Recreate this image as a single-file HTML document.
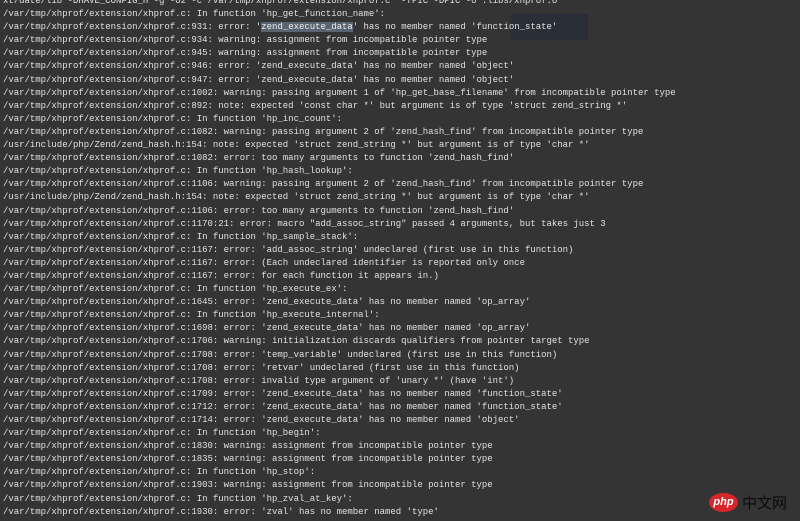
<!DOCTYPE html>
<html><head><meta charset="utf-8"><style>
html,body{margin:0;padding:0;width:800px;height:521px;overflow:hidden;background:#343434;}
pre{position:absolute;left:3px;top:-5px;margin:0;font-family:"Liberation Mono",monospace;font-size:9px;letter-spacing:-0.02px;line-height:13.1px;color:#e0e0e0;white-space:pre;}
.hl{background:#5a6470;color:#eee;}
.box{position:absolute;left:511px;top:14px;width:77px;height:26px;background:rgba(30,40,60,0.45);}
.logo{position:absolute;left:709px;top:493px;width:29px;height:19px;border-radius:50%;background:#d8262b;color:#fff;font:italic bold 11px "Liberation Sans",sans-serif;text-align:center;line-height:19px;}
.cn{position:absolute;left:742px;top:493px;font:15px "Noto Sans CJK SC",sans-serif;color:#0a0a0a;line-height:19px;}
</style></head><body>
<div class="box"></div>
<pre>xt/date/lib -DHAVE_CONFIG_H -g -O2 -c /var/tmp/xhprof/extension/xhprof.c  -fPIC -DPIC -o .libs/xhprof.o
/var/tmp/xhprof/extension/xhprof.c: In function 'hp_get_function_name':
/var/tmp/xhprof/extension/xhprof.c:931: error: '<span class="hl">zend_execute_data</span>' has no member named 'function_state'
/var/tmp/xhprof/extension/xhprof.c:934: warning: assignment from incompatible pointer type
/var/tmp/xhprof/extension/xhprof.c:945: warning: assignment from incompatible pointer type
/var/tmp/xhprof/extension/xhprof.c:946: error: 'zend_execute_data' has no member named 'object'
/var/tmp/xhprof/extension/xhprof.c:947: error: 'zend_execute_data' has no member named 'object'
/var/tmp/xhprof/extension/xhprof.c:1002: warning: passing argument 1 of 'hp_get_base_filename' from incompatible pointer type
/var/tmp/xhprof/extension/xhprof.c:892: note: expected 'const char *' but argument is of type 'struct zend_string *'
/var/tmp/xhprof/extension/xhprof.c: In function 'hp_inc_count':
/var/tmp/xhprof/extension/xhprof.c:1082: warning: passing argument 2 of 'zend_hash_find' from incompatible pointer type
/usr/include/php/Zend/zend_hash.h:154: note: expected 'struct zend_string *' but argument is of type 'char *'
/var/tmp/xhprof/extension/xhprof.c:1082: error: too many arguments to function 'zend_hash_find'
/var/tmp/xhprof/extension/xhprof.c: In function 'hp_hash_lookup':
/var/tmp/xhprof/extension/xhprof.c:1106: warning: passing argument 2 of 'zend_hash_find' from incompatible pointer type
/usr/include/php/Zend/zend_hash.h:154: note: expected 'struct zend_string *' but argument is of type 'char *'
/var/tmp/xhprof/extension/xhprof.c:1106: error: too many arguments to function 'zend_hash_find'
/var/tmp/xhprof/extension/xhprof.c:1170:21: error: macro "add_assoc_string" passed 4 arguments, but takes just 3
/var/tmp/xhprof/extension/xhprof.c: In function 'hp_sample_stack':
/var/tmp/xhprof/extension/xhprof.c:1167: error: 'add_assoc_string' undeclared (first use in this function)
/var/tmp/xhprof/extension/xhprof.c:1167: error: (Each undeclared identifier is reported only once
/var/tmp/xhprof/extension/xhprof.c:1167: error: for each function it appears in.)
/var/tmp/xhprof/extension/xhprof.c: In function 'hp_execute_ex':
/var/tmp/xhprof/extension/xhprof.c:1645: error: 'zend_execute_data' has no member named 'op_array'
/var/tmp/xhprof/extension/xhprof.c: In function 'hp_execute_internal':
/var/tmp/xhprof/extension/xhprof.c:1698: error: 'zend_execute_data' has no member named 'op_array'
/var/tmp/xhprof/extension/xhprof.c:1706: warning: initialization discards qualifiers from pointer target type
/var/tmp/xhprof/extension/xhprof.c:1708: error: 'temp_variable' undeclared (first use in this function)
/var/tmp/xhprof/extension/xhprof.c:1708: error: 'retvar' undeclared (first use in this function)
/var/tmp/xhprof/extension/xhprof.c:1708: error: invalid type argument of 'unary *' (have 'int')
/var/tmp/xhprof/extension/xhprof.c:1709: error: 'zend_execute_data' has no member named 'function_state'
/var/tmp/xhprof/extension/xhprof.c:1712: error: 'zend_execute_data' has no member named 'function_state'
/var/tmp/xhprof/extension/xhprof.c:1714: error: 'zend_execute_data' has no member named 'object'
/var/tmp/xhprof/extension/xhprof.c: In function 'hp_begin':
/var/tmp/xhprof/extension/xhprof.c:1830: warning: assignment from incompatible pointer type
/var/tmp/xhprof/extension/xhprof.c:1835: warning: assignment from incompatible pointer type
/var/tmp/xhprof/extension/xhprof.c: In function 'hp_stop':
/var/tmp/xhprof/extension/xhprof.c:1903: warning: assignment from incompatible pointer type
/var/tmp/xhprof/extension/xhprof.c: In function 'hp_zval_at_key':
/var/tmp/xhprof/extension/xhprof.c:1930: error: 'zval' has no member named 'type'</pre>
<div class="logo">php</div>
<div class="cn">中文网</div>
</body></html>
